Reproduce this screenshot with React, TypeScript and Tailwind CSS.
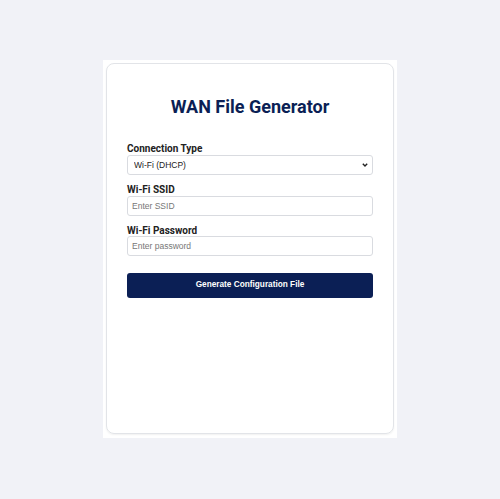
const fieldBox =
  "block w-full h-5 rounded-[3px] border border-[#d9dbe0] bg-white text-[8.5px] text-[#222] outline-none font-['Liberation_Sans',sans-serif]";

const labelText = "text-[10px] font-bold text-[#222] leading-[10px]";

export default function App() {
  return (
    <div className="min-h-screen w-full bg-[#f1f2f7] flex justify-center pt-[60px] font-['Roboto',sans-serif]">
      <div className="w-[294px] h-[378px] bg-white p-[3px] pb-[4px]">
        <div className="h-full rounded-lg border border-[#e2e4e8] shadow-[0_1px_2px_rgba(0,0,0,0.06)] px-5 pt-[33px]">
          <h1 className="text-center text-[18px] font-bold text-[#0b1f55] leading-5">
            WAN File Generator
          </h1>

          <form className="mt-[27px] flex flex-col" onSubmit={(e) => e.preventDefault()}>
            <label className={labelText}>Connection Type</label>
            <div className="relative mt-[1px]">
              <select className={`${fieldBox} appearance-none pl-[6px] pr-5`} defaultValue="dhcp">
                <option value="dhcp">Wi-Fi (DHCP)</option>
                <option value="static">Wi-Fi (Static IP)</option>
                <option value="ethernet">Ethernet</option>
              </select>
              <svg
                className="pointer-events-none absolute right-[5px] top-[8px] w-[6px] h-[4px]"
                viewBox="0 0 6 4"
                fill="none"
              >
                <path d="M0.8 0.8 L3 3 L5.2 0.8" stroke="#222" strokeWidth="1.4" />
              </svg>
            </div>

            <label className={`mt-[10px] ${labelText}`}>Wi-Fi SSID</label>
            <input
              className={`${fieldBox} mt-[0.5px] px-[4px] placeholder:text-[#777]`}
              placeholder="Enter SSID"
            />

            <label className={`mt-[10px] ${labelText}`}>Wi-Fi Password</label>
            <input
              type="password"
              className={`${fieldBox} mt-[0.5px] px-[4px] placeholder:text-[#777]`}
              placeholder="Enter password"
            />

            <button
              type="submit"
              className="mt-[17px] h-[25px] w-full rounded-[3px] bg-[#0b1f55] text-white text-[8.25px] font-bold font-['Liberation_Sans',sans-serif]"
            >
              Generate Configuration File
            </button>
          </form>
        </div>
      </div>
    </div>
  );
}
